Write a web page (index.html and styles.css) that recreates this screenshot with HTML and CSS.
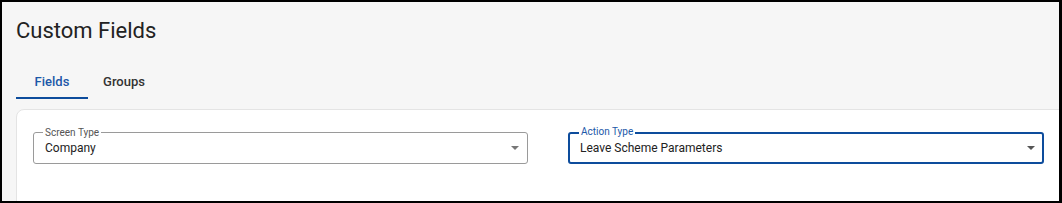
FILE: index.html
```html
<!DOCTYPE html>
<html>
<head>
<meta charset="utf-8">
<link rel="stylesheet" href="styles.css">
</head>
<body>
<div class="frame">
  <h1 class="title">Custom Fields</h1>
  <div class="tabs">
    <div class="tab active">Fields</div>
    <div class="tab">Groups</div>
  </div>
  <div class="card">
    <div class="fields">
      <div class="select">
        <span class="label">Screen Type</span>
        <span class="value">Company</span>
        <span class="arrow"></span>
      </div>
      <div class="select focused">
        <span class="label">Action Type</span>
        <span class="value">Leave Scheme Parameters</span>
        <span class="arrow"></span>
      </div>
    </div>
  </div>
</div>
</body>
</html>
```
FILE: styles.css
```css
html, body {
  margin: 0;
  padding: 0;
}
body {
  font-family: Roboto, "Liberation Sans", sans-serif;
  background: #000;
}
.frame {
  box-sizing: border-box;
  width: 1062px;
  height: 203px;
  border-style: solid;
  border-color: #000;
  border-width: 2px 3px 2px 2px;
  background: #f6f6f6;
  padding: 16px 0 0 14px;
  overflow: hidden;
}
.title {
  margin: 0;
  font-size: 22px;
  line-height: 26px;
  font-weight: 400;
  color: #222;
}
.tabs {
  display: flex;
  margin-top: 20px;
}
.tab {
  min-width: 72px;
  box-sizing: border-box;
  padding: 10px 12px 7px;
  text-align: center;
  font-size: 13px;
  line-height: 16px;
  font-weight: 500;
  color: #333;
  border-bottom: 2px solid transparent;
}
.tab.active {
  color: #1c58a8;
  border-bottom-color: #0d4c9c;
}
.card {
  margin-top: 10px;
  width: 1100px;
  height: 120px;
  background: #fff;
  border: 1px solid #e4e4e4;
  border-radius: 8px 0 0 0;
  padding: 22px 16px 0;
}
.fields {
  display: grid;
  grid-template-columns: 495px 476px;
  column-gap: 40px;
}
.select {
  position: relative;
  box-sizing: border-box;
  height: 32px;
  border: 1px solid #9a9a9a;
  border-radius: 3px;
  display: flex;
  align-items: center;
  padding: 0 8px 0 11px;
}
.select.focused {
  border: 2px solid #0d4c9c;
  padding: 0 7px 0 10px;
}
.label {
  position: absolute;
  top: -6px;
  left: 9px;
  padding: 0 2px;
  background: #fff;
  font-size: 10px;
  line-height: 12px;
  color: #555;
}
.select.focused .label {
  top: -8px;
  color: #1c58a8;
}
.value {
  font-size: 12px;
  line-height: 14px;
  color: #222;
}
.arrow {
  margin-left: auto;
  width: 0;
  height: 0;
  border-left: 4px solid transparent;
  border-right: 4px solid transparent;
  border-top: 4px solid #777;
}
.select.focused .arrow {
  border-top-color: #555;
}
```
